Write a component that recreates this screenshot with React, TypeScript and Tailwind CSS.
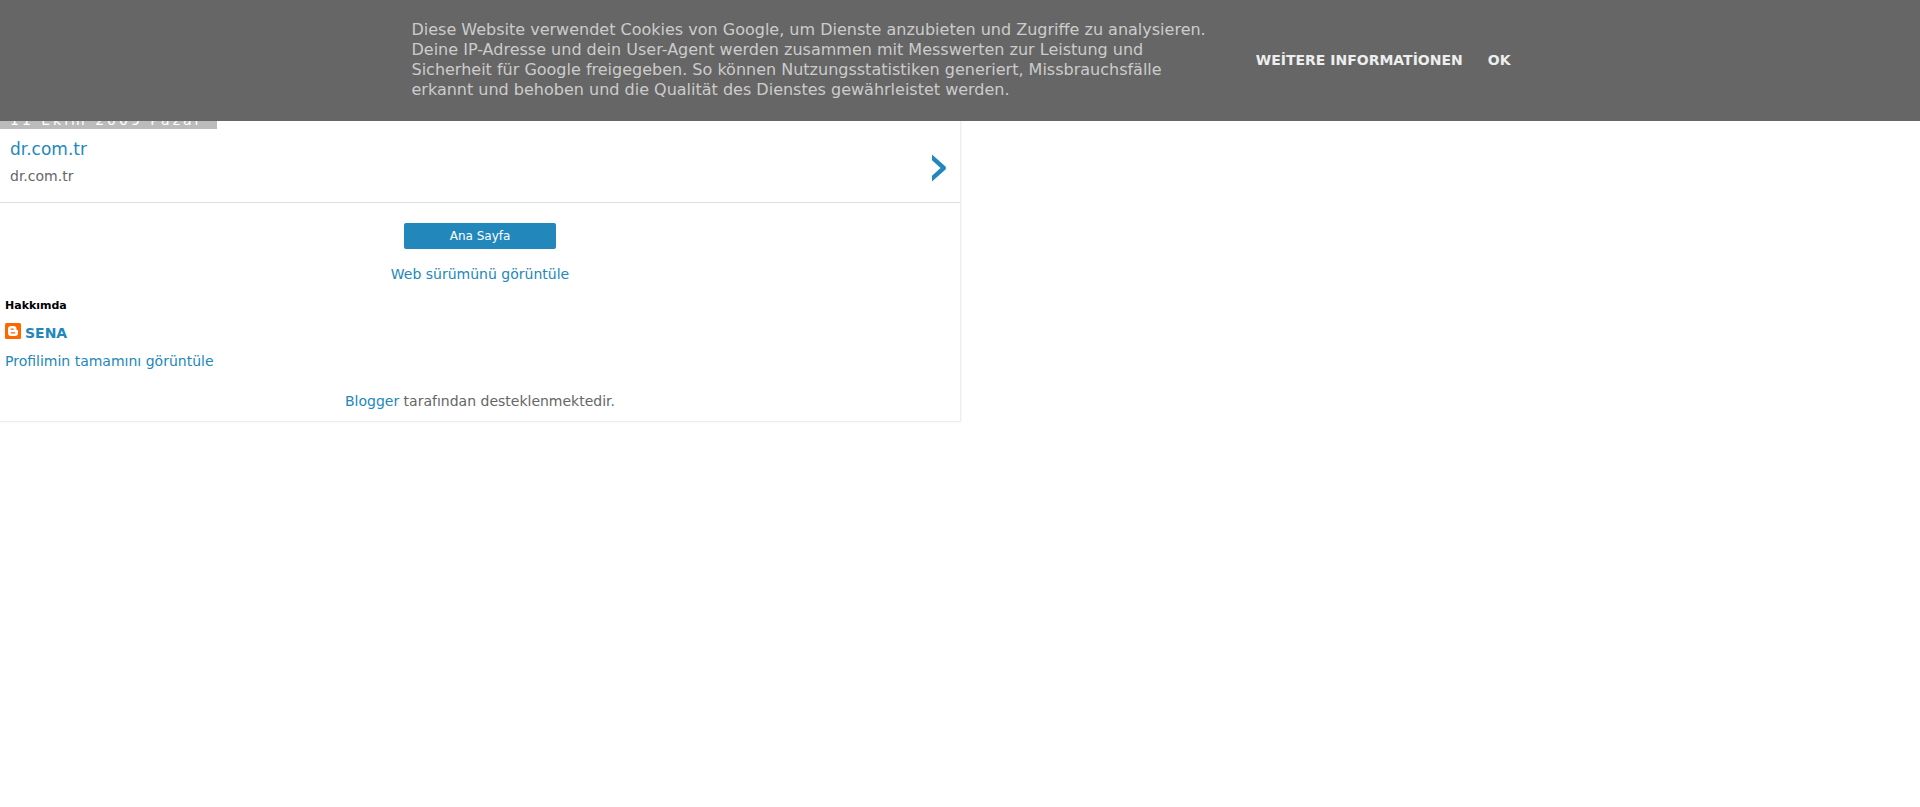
function CookieNotice() {
  return (
    <header className="fixed inset-x-0 top-0 z-10 bg-[#666] pt-5 pb-[21px] text-[16px] leading-5 text-[#ccc]">
      <div className="flex items-center justify-center gap-[50px] pr-4 pl-[18px]">
        <p className="max-w-[804px]">
          Diese Website verwendet Cookies von Google, um Dienste anzubieten und Zugriffe zu analysieren.
          <br />
          Deine IP-Adresse und dein User-Agent werden zusammen mit Messwerten zur Leistung und
          <br />
          Sicherheit für Google freigegeben. So können Nutzungsstatistiken generiert, Missbrauchsfälle
          <br />
          erkannt und behoben und die Qualität des Dienstes gewährleistet werden.
        </p>
        <div className="flex gap-[25px] text-[14px] font-bold whitespace-nowrap text-[#eee]">
          <a href="#info">WEİTERE INFORMATİONEN</a>
          <a href="#ok">OK</a>
        </div>
      </div>
    </header>
  );
}

function BloggerIcon() {
  return (
    <svg viewBox="0 0 16 16" className="mb-1 size-4" aria-hidden="true">
      <rect width="16" height="16" rx="1.5" fill="#f60" />
      <path
        d="M6 3h2.500a3 3 0 0 1 3 3v.4c0 .5.300.7.700.7s.8.300.8.800V10a3 3 0 0 1-3 3H6a3 3 0 0 1-3-3V6a3 3 0 0 1 3-3z"
        fill="#fff"
      />
      <path d="M6.200 6.200h2M6.200 9.800h3.600" stroke="#f60" strokeWidth="1.300" strokeLinecap="round" />
    </svg>
  );
}

export default function App() {
  return (
    <div className="min-h-screen bg-white font-['DejaVu_Sans',sans-serif] text-[14px] leading-5 text-[#666]">
      <CookieNotice />
      <main className="w-[calc(50%+1px)] border-r border-b border-[#eee] pt-[111px] shadow-[0_0_3px_rgba(0,0,0,0.06)]">
        <h2 className="w-fit bg-[#bbb] pr-[14px] pl-[10px] leading-[18px] tracking-[3px] text-white">
          11 Ekim 2009 Pazar
        </h2>
        <article className="flex items-center justify-between border-b border-[#ddd] pt-[9px] pr-[14px] pb-4 pl-[10px]">
          <div>
            <h3 className="text-[17px] leading-[22px] text-[#28b]">
              <a href="#post">dr.com.tr</a>
            </h3>
            <p className="mt-[6px]">dr.com.tr</p>
          </div>
          <a href="#post" aria-label="dr.com.tr" className="pt-3 text-[#28b]">
            <svg viewBox="0 0 15 28" className="h-7 w-[15px]" aria-hidden="true">
              <path d="M1 0.500L14.800 12.700V15.300L1 27.500V21.800L9.500 14L1 6.200Z" fill="currentColor" />
            </svg>
          </a>
        </article>
        <nav className="flex flex-col items-center gap-[15px] pt-5 text-[#28b]">
          <a href="#home" className="w-[152px] rounded-[2px] bg-[#28b] py-[3px] text-center text-[12px] text-white">
            Ana Sayfa
          </a>
          <a href="#web">Web sürümünü görüntüle</a>
        </nav>
        <section className="px-[5px] pt-3 text-[#28b]">
          <h2 className="text-[11px] font-bold text-black">Hakkımda</h2>
          <a href="#sena" className="mt-[7px] flex w-fit items-center gap-1 font-bold">
            <BloggerIcon />
            SENA
          </a>
          <a href="#profile" className="mt-2 block w-fit">
            Profilimin tamamını görüntüle
          </a>
        </section>
        <footer className="pt-5 pb-[10px] text-center">
          <a href="#blogger" className="text-[#28b]">
            Blogger
          </a>{" "}
          tarafından desteklenmektedir.
        </footer>
      </main>
    </div>
  );
}
